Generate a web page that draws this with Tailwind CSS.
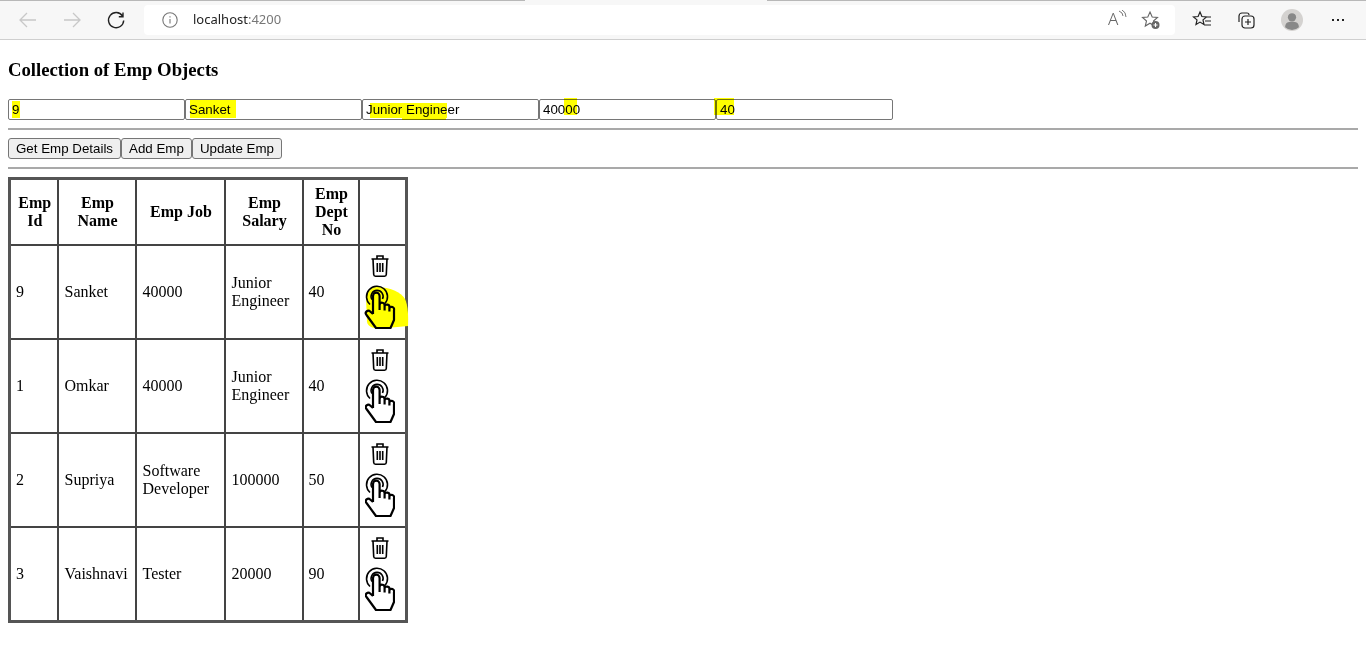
<!DOCTYPE html>
<html lang="en">
<head>
    <meta charset="UTF-8">
    <title>Emp</title>
    <script src="https://cdn.jsdelivr.net/npm/@tailwindcss/browser@4"></script>
</head>
<body class="bg-white overflow-hidden font-['Liberation_Serif',serif] text-black">
    <!-- browser toolbar -->
    <header class="relative h-10 bg-[#f7f7f7] border-t border-t-[#b8b8b8] border-b border-b-[#cfcfcf] flex items-center font-['Noto_Sans',sans-serif]">
        <i class="absolute left-[525px] top-[-1px] w-[242px] h-[1px] bg-[#f7f7f7]"></i>
        <div class="w-[144px] flex items-center pl-[18px] gap-[24px] shrink-0">
            <svg class="w-5 h-5" viewBox="0 0 20 20" fill="none" stroke="#c8c8c8" stroke-width="1.3"><path d="M18 10H2M9 3l-7 7 7 7"/></svg>
            <svg class="w-5 h-5" viewBox="0 0 20 20" fill="none" stroke="#c8c8c8" stroke-width="1.3"><path d="M2 10h16M11 3l7 7-7 7"/></svg>
            <svg class="w-5 h-5" viewBox="0 0 20 20" fill="none" stroke="#222" stroke-width="1.4"><path d="M16.500 6A7.600 7.600 0 1 0 17.700 10.500M17 2.500V6.700H12.800"/></svg>
        </div>
        <div class="h-[30px] w-[1031px] bg-white rounded-[4px] flex items-center justify-between shrink-0">
            <div class="flex items-center pl-[18px]">
                <svg class="w-4 h-4" viewBox="0 0 16 16" fill="none" stroke="#777" stroke-width="1.1"><circle cx="8" cy="8" r="7.200"/><path d="M8 7v4.500M8 4.200v1.200"/></svg>
                <span class="ml-[15px] text-[13px] text-[#222]">localhost<span class="text-[#777]">:4200</span></span>
            </div>
            <div class="flex items-center pr-[14px] gap-[16px]">
                <div class="relative w-5 h-5 text-[#666]">
                    <span class="absolute left-[3px] top-[-3px] text-[17px] font-light leading-[24px]">A</span>
                    <svg class="absolute left-[13px] top-[0px] w-[9px] h-[10px]" viewBox="0 0 9 10" fill="none" stroke="#777"><path d="M1 1q4 1.500 4 5M4 0q4 2 4 7"/></svg>
                </div>
                <svg class="w-5 h-5" viewBox="0 0 20 20" fill="none" stroke="#666" stroke-width="1.1"><path d="M9 2l2.200 5 5.300.5-4 3.500 1.200 5-4.700-2.800-4.700 2.800 1.200-5-4-3.500 5.300-.5z"/><circle cx="14.500" cy="15" r="4" fill="#666" stroke="none"/><path d="M14.500 13v4M12.500 15h4" stroke="#fff"/></svg>
            </div>
        </div>
        <div class="flex items-center pl-[17px] gap-[24px]">
            <svg class="w-5 h-5" viewBox="0 0 20 20" fill="none" stroke="#222" stroke-width="1.2"><path d="M8 2l1.900 4.500 4.600.4-3.500 3 1 4.600-4-2.400-4 2.400 1-4.600-3.500-3 4.600-.4zM14 7h5M13 11h6M12 15h7"/></svg>
            <svg class="w-5 h-5" viewBox="0 0 20 20" fill="none" stroke="#222" stroke-width="1.2"><path d="M3 12V6a3 3 0 0 1 3-3h5a2 2 0 0 1 2 2"/><rect x="6" y="6" width="12" height="12" rx="3"/><path d="M12 9v6M9 12h6"/></svg>
            <svg class="w-[22px] h-[22px] mx-[1px]" viewBox="0 0 24 24"><circle cx="12" cy="12" r="12" fill="#d4d2d0"/><circle cx="12" cy="9" r="4.500" fill="#888"/><path d="M4.500 20c0-5 3-6 7.500-6s7.500 1 7.500 6a11 11 0 0 1-15 0z" fill="#888"/></svg>
            <div class="flex gap-[3px] ml-[4px]"><i class="w-[2px] h-[2px] bg-[#222] block"></i><i class="w-[2px] h-[2px] bg-[#222] block"></i><i class="w-[2px] h-[2px] bg-[#222] block"></i></div>
        </div>
    </header>

    <main class="px-2">
        <h3 class="text-[18.72px] font-bold mt-[19px] leading-[22px]">Collection of Emp Objects</h3>

        <div class="relative flex mt-[18px] font-['Liberation_Sans',sans-serif] text-[13.33px]">
            <input value="9" class="w-[177px] h-[21px] border border-[#767676] rounded-[2px] px-[3px] outline-none">
            <input value="Sanket" class="w-[177px] h-[21px] border border-[#767676] rounded-[2px] px-[3px] outline-none">
            <input value="Junior Engineer" class="w-[177px] h-[21px] border border-[#767676] rounded-[2px] px-[3px] outline-none">
            <input value="40000" class="w-[177px] h-[21px] border border-[#767676] rounded-[2px] px-[3px] outline-none">
            <input value="40" class="w-[177px] h-[21px] border border-[#767676] rounded-[2px] px-[3px] outline-none">
            <!-- highlighter marks -->
            <i class="absolute left-[4px] top-[2px] w-[8px] h-[17px] bg-[#ffff00] mix-blend-multiply"></i>
            <i class="absolute left-[182px] top-[1px] w-[46px] h-[18px] bg-[#ffff00] mix-blend-multiply"></i>
            <i class="absolute left-[362px] top-[4px] w-[77px] h-[15px] bg-[#ffff00] mix-blend-multiply"></i>
            <i class="absolute left-[394px] top-[17px] w-[44px] h-[4px] bg-[#ffff00] mix-blend-multiply"></i>
            <i class="absolute left-[556px] top-[-1px] w-[13px] h-[17px] bg-[#ffff00] mix-blend-multiply"></i>
            <i class="absolute left-[706px] top-[-1px] w-[20px] h-[17px] bg-[#ffff00] mix-blend-multiply"></i>
        </div>

        <hr class="mt-2 border-0 h-[2px] bg-[#a9a9a9]">

        <div class="flex mt-[8px] font-['Liberation_Sans',sans-serif] text-[13.33px]">
            <button class="h-[21px] px-[7px] bg-[#efefef] border border-[#767676] rounded-[3px]">Get Emp Details</button>
            <button class="h-[21px] px-[7px] bg-[#efefef] border border-[#767676] rounded-[3px]">Add Emp</button>
            <button class="h-[21px] px-[7px] bg-[#efefef] border border-[#767676] rounded-[3px]">Update Emp</button>
        </div>

        <hr class="mt-2 border-0 h-[2px] bg-[#a9a9a9]">

        <table class="mt-[8px] w-[399px] table-fixed border-collapse border-[3px] border-[#555] text-[16px] leading-[18px]">
            <colgroup>
                <col class="w-[48px]"><col class="w-[78px]"><col class="w-[89px]"><col class="w-[78px]"><col class="w-[56px]"><col class="w-[48px]">
            </colgroup>
            <thead>
                <tr class="h-[66px]">
                    <th class="border-2 border-[#444] pl-[6px] pr-[4px]">Emp Id</th>
                    <th class="border-2 border-[#444] pl-[6px] pr-[4px]">Emp Name</th>
                    <th class="border-2 border-[#444] pl-[6px] pr-[4px]">Emp Job</th>
                    <th class="border-2 border-[#444] pl-[6px] pr-[4px]">Emp Salary</th>
                    <th class="border-2 border-[#444] pl-[6px] pr-[4px]">Emp Dept No</th>
                    <th class="border-2 border-[#444]"></th>
                </tr>
            </thead>
            <tbody>
                <tr class="h-[94px]">
                    <td class="border-2 border-[#444] px-[5px]">9</td>
                    <td class="border-2 border-[#444] pl-[6px] pr-0">Sanket</td>
                    <td class="border-2 border-[#444] pl-[6px] pr-0">40000</td>
                    <td class="border-2 border-[#444] pl-[6px] pr-0">Junior Engineer</td>
                    <td class="border-2 border-[#444] px-[5px]">40</td>
                    <td class="border-2 border-[#444] p-0">
                        <svg class="block ml-[11px] w-[18px] h-[22px]" viewBox="0 0 18 22" fill="none" stroke="#000" stroke-width="1.600"><path d="M.5 4h17M6 3.500V1h6v2.500M2 4l.7 15.500a1.800 1.800 0 0 0 1.800 1.700h9a1.800 1.800 0 0 0 1.800-1.700L16 4M6.300 8v9M9 8v9M11.700 8v9"/></svg>
                        <svg class="block ml-[5px] mt-[8px] w-[30px] h-[44px] overflow-visible" viewBox="0 0 30 44" fill="none" stroke="#000" stroke-width="1.600"><path d="M12 2C25 2 36 7 40 14c3 6 3.500 18 3 27-10 1-22 2-32 2-4 0-8-2-9-6L1 12C3 5 7 2 12 2z" fill="#ffff00" stroke="none"/><path d="M5 19.500A10.500 10.500 0 1 1 20 18.500M7 14.500A6 6 0 1 1 17.500 14"/><path stroke-width="2.200" stroke-linejoin="round" d="M8 29V11a3.300 3.300 0 0 1 6.600 0V20a2.500 2.500 0 0 1 5 .5v1a2.400 2.400 0 0 1 4.800 1v1a2.300 2.300 0 0 1 4.600 1.500V35l-3.500 8H11L1.500 30a2.400 2.400 0 0 1 3.700-3.500L8 29M14.600 20v5M19.600 21.500v4M24.400 23.500v3"/></svg>
                    </td>
                </tr>
                <tr class="h-[94px]">
                    <td class="border-2 border-[#444] px-[5px]">1</td>
                    <td class="border-2 border-[#444] pl-[6px] pr-0">Omkar</td>
                    <td class="border-2 border-[#444] pl-[6px] pr-0">40000</td>
                    <td class="border-2 border-[#444] pl-[6px] pr-0">Junior Engineer</td>
                    <td class="border-2 border-[#444] px-[5px]">40</td>
                    <td class="border-2 border-[#444] p-0">
                        <svg class="block ml-[11px] w-[18px] h-[22px]" viewBox="0 0 18 22" fill="none" stroke="#000" stroke-width="1.600"><path d="M.5 4h17M6 3.500V1h6v2.500M2 4l.7 15.500a1.800 1.800 0 0 0 1.800 1.700h9a1.800 1.800 0 0 0 1.800-1.700L16 4M6.300 8v9M9 8v9M11.700 8v9"/></svg>
                        <svg class="block ml-[5px] mt-[8px] w-[30px] h-[44px]" viewBox="0 0 30 44" fill="none" stroke="#000" stroke-width="1.600"><path d="M5 19.500A10.500 10.500 0 1 1 20 18.500M7 14.500A6 6 0 1 1 17.500 14"/><path stroke-width="2.200" stroke-linejoin="round" d="M8 29V11a3.300 3.300 0 0 1 6.600 0V20a2.500 2.500 0 0 1 5 .5v1a2.400 2.400 0 0 1 4.800 1v1a2.300 2.300 0 0 1 4.600 1.500V35l-3.500 8H11L1.500 30a2.400 2.400 0 0 1 3.700-3.500L8 29M14.600 20v5M19.600 21.500v4M24.400 23.500v3"/></svg>
                    </td>
                </tr>
                <tr class="h-[94px]">
                    <td class="border-2 border-[#444] px-[5px]">2</td>
                    <td class="border-2 border-[#444] pl-[6px] pr-0">Supriya</td>
                    <td class="border-2 border-[#444] pl-[6px] pr-0">Software Developer</td>
                    <td class="border-2 border-[#444] pl-[6px] pr-0">100000</td>
                    <td class="border-2 border-[#444] px-[5px]">50</td>
                    <td class="border-2 border-[#444] p-0">
                        <svg class="block ml-[11px] w-[18px] h-[22px]" viewBox="0 0 18 22" fill="none" stroke="#000" stroke-width="1.600"><path d="M.5 4h17M6 3.500V1h6v2.500M2 4l.7 15.500a1.800 1.800 0 0 0 1.800 1.700h9a1.800 1.800 0 0 0 1.800-1.700L16 4M6.300 8v9M9 8v9M11.700 8v9"/></svg>
                        <svg class="block ml-[5px] mt-[8px] w-[30px] h-[44px]" viewBox="0 0 30 44" fill="none" stroke="#000" stroke-width="1.600"><path d="M5 19.500A10.500 10.500 0 1 1 20 18.500M7 14.500A6 6 0 1 1 17.500 14"/><path stroke-width="2.200" stroke-linejoin="round" d="M8 29V11a3.300 3.300 0 0 1 6.600 0V20a2.500 2.500 0 0 1 5 .5v1a2.400 2.400 0 0 1 4.800 1v1a2.300 2.300 0 0 1 4.600 1.500V35l-3.500 8H11L1.500 30a2.400 2.400 0 0 1 3.700-3.500L8 29M14.600 20v5M19.600 21.500v4M24.400 23.500v3"/></svg>
                    </td>
                </tr>
                <tr class="h-[95px]">
                    <td class="border-2 border-[#444] px-[5px]">3</td>
                    <td class="border-2 border-[#444] pl-[6px] pr-0">Vaishnavi</td>
                    <td class="border-2 border-[#444] pl-[6px] pr-0">Tester</td>
                    <td class="border-2 border-[#444] pl-[6px] pr-0">20000</td>
                    <td class="border-2 border-[#444] px-[5px]">90</td>
                    <td class="border-2 border-[#444] p-0">
                        <svg class="block ml-[11px] w-[18px] h-[22px]" viewBox="0 0 18 22" fill="none" stroke="#000" stroke-width="1.600"><path d="M.5 4h17M6 3.500V1h6v2.500M2 4l.7 15.500a1.800 1.800 0 0 0 1.800 1.700h9a1.800 1.800 0 0 0 1.800-1.700L16 4M6.300 8v9M9 8v9M11.700 8v9"/></svg>
                        <svg class="block ml-[5px] mt-[8px] w-[30px] h-[44px]" viewBox="0 0 30 44" fill="none" stroke="#000" stroke-width="1.600"><path d="M5 19.500A10.500 10.500 0 1 1 20 18.500M7 14.500A6 6 0 1 1 17.500 14"/><path stroke-width="2.200" stroke-linejoin="round" d="M8 29V11a3.300 3.300 0 0 1 6.600 0V20a2.500 2.500 0 0 1 5 .5v1a2.400 2.400 0 0 1 4.800 1v1a2.300 2.300 0 0 1 4.600 1.500V35l-3.500 8H11L1.500 30a2.400 2.400 0 0 1 3.700-3.500L8 29M14.600 20v5M19.600 21.500v4M24.400 23.500v3"/></svg>
                    </td>
                </tr>
            </tbody>
        </table>
    </main>
</body>
</html>
